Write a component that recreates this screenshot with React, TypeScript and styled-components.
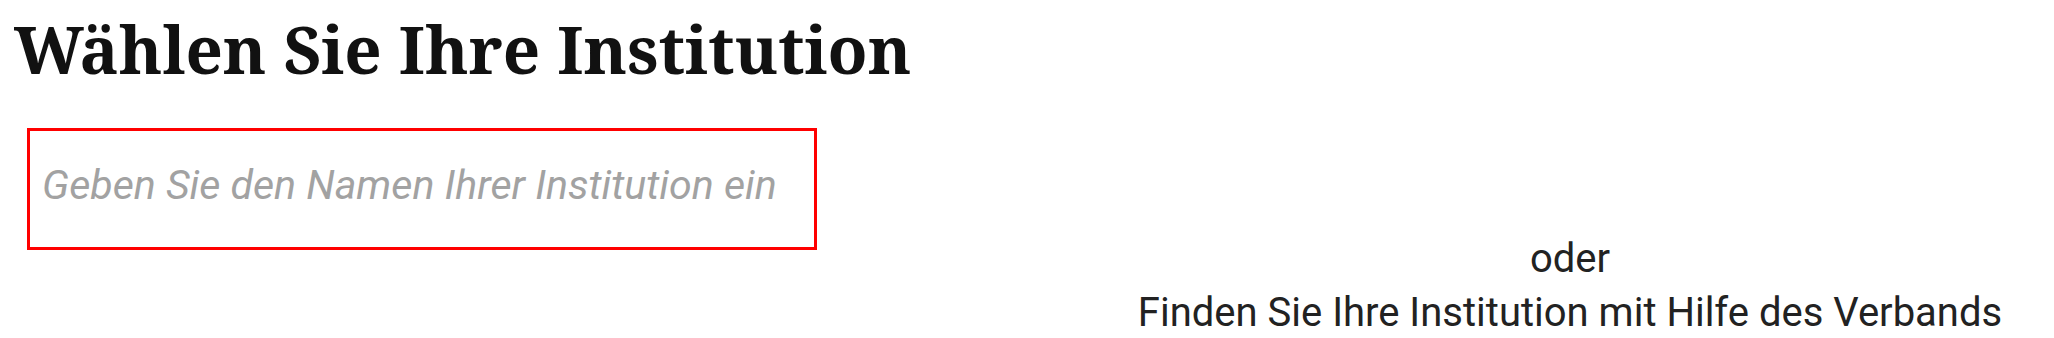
import React, { useState } from "react";
import styled, { createGlobalStyle } from "styled-components";

const GlobalStyle = createGlobalStyle`
  html, body {
    margin: 0;
    background: #ffffff;
  }
  body {
    font-family: Roboto, "Noto Sans", sans-serif;
    color: #222222;
  }
`;

const StyledPage = styled.main`
  width: 2054px;
  height: 338px;
  overflow: hidden;
`;

const StyledTitle = styled.h1`
  margin: 0;
  padding: 9px 0 0 14px;
  font-family: "Noto Serif", "DejaVu Serif", serif;
  font-weight: 700;
  font-size: 65.4px;
  line-height: 80px;
  color: #111111;
`;

const StyledRow = styled.section`
  display: grid;
  grid-template-columns: 1086px 1fr;
  margin-top: 39px;
`;

const StyledSearchCell = styled.div`
  padding-left: 27px;
`;

const StyledInput = styled.input`
  box-sizing: border-box;
  display: block;
  width: 790px;
  height: 122px;
  padding: 0 12px 8px;
  border: 3px solid #ff0000;
  border-radius: 0;
  outline: none;
  background: #ffffff;
  font-family: Roboto, "Noto Sans", sans-serif;
  font-style: italic;
  font-size: 41.1px;
  color: #222222;

  &::placeholder {
    color: #a2a2a2;
    opacity: 1;
  }
`;

const StyledAlternative = styled.div`
  padding-top: 104px;
  text-align: center;
  font-size: 40px;
  line-height: 54px;
`;

const StyledOr = styled.p`
  margin: 0;
`;

const StyledFederationLink = styled.a`
  display: block;
  color: #222222;
  text-decoration: none;
  cursor: pointer;

  &:hover {
    text-decoration: underline;
  }
`;

const App = () => {
  const [institution, setInstitution] = useState("");

  return (
    <>
      <GlobalStyle />
      <StyledPage>
        <StyledTitle>Wählen Sie Ihre Institution</StyledTitle>
        <StyledRow>
          <StyledSearchCell>
            <StyledInput
              type="text"
              name="institution"
              placeholder="Geben Sie den Namen Ihrer Institution ein"
              value={institution}
              onChange={(e) => setInstitution(e.target.value)}
            />
          </StyledSearchCell>
          <StyledAlternative>
            <StyledOr>oder</StyledOr>
            <StyledFederationLink href="#">
              Finden Sie Ihre Institution mit Hilfe des Verbands
            </StyledFederationLink>
          </StyledAlternative>
        </StyledRow>
      </StyledPage>
    </>
  );
};

export default App;
